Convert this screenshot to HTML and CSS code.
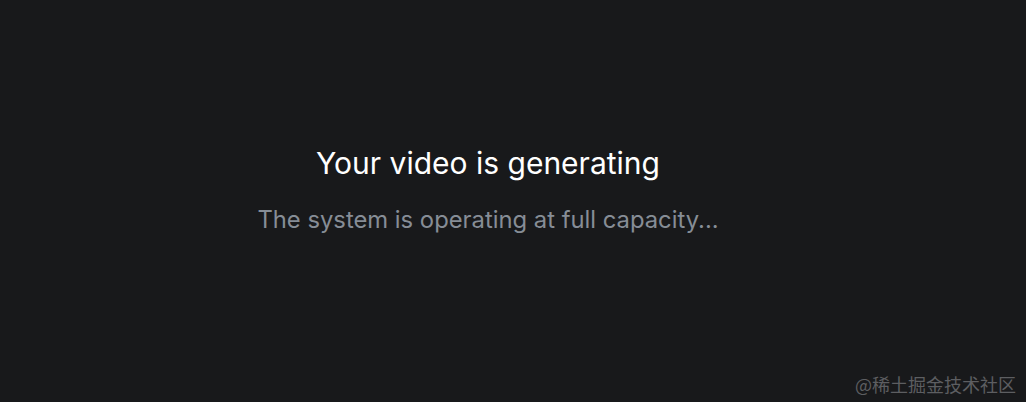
FILE: index.html
```html
<!DOCTYPE html>
<html lang="en">
<head>
  <meta charset="UTF-8">
  <meta name="viewport" content="width=device-width, initial-scale=1.0">
  <title>Video generating</title>
  <link rel="stylesheet" href="styles.css">
</head>
<body>
  <main class="status">
    <h1 class="status-title">Your video is generating</h1>
    <p class="status-text">The system is operating at full capacity...</p>
  </main>

  <!-- watermark -->
  <div class="watermark">@稀土掘金技术社区</div>
</body>
</html>
```

FILE: styles.css
```css
html, body {
  margin: 0;
  height: 100%;
}

body {
  background-color: #18191b;
  font-family: Inter, "Noto Sans", sans-serif;
  overflow: hidden;
}

.status {
  height: 100%;
  box-sizing: border-box;
  padding: 0 50px 24px 0;
  display: flex;
  flex-direction: column;
  justify-content: center;
  align-items: center;
}

.status-title {
  margin: 0;
  color: #ffffff;
  font-size: 30px;
  font-weight: 400;
  line-height: 36px;
}

.status-text {
  margin: 25px 0 0;
  color: #868d96;
  font-size: 23.8px;
  line-height: 28px;
}

.watermark {
  position: absolute;
  right: 10px;
  bottom: 8px;
  color: #5d5e61;
  font-family: "Noto Sans CJK SC", sans-serif;
  font-size: 18px;
  line-height: 20px;
}
```
